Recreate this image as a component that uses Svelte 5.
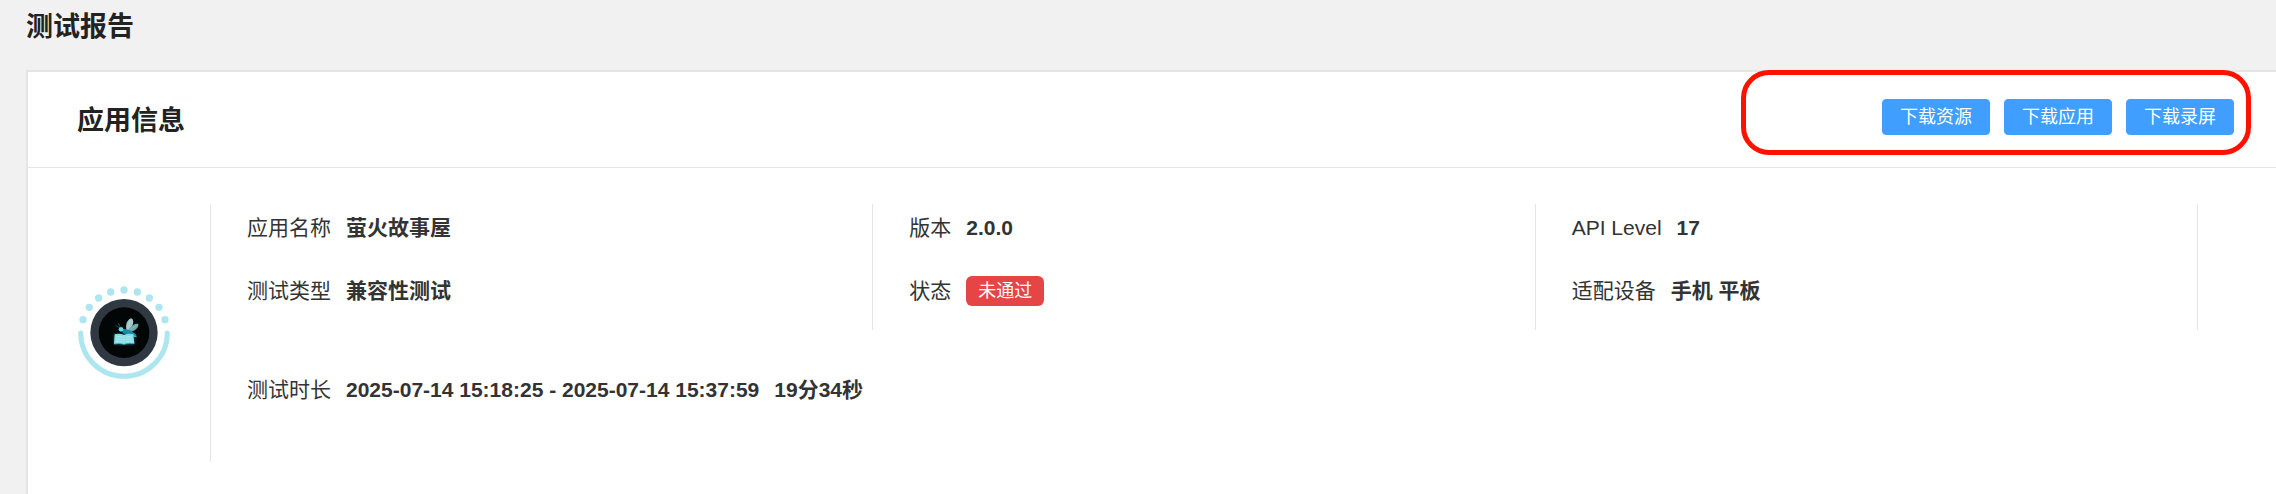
<script lang="ts">
    interface Field {
        label: string;
        value: string;
        failed?: boolean;
    }

    const downloads = ['下载资源', '下载应用', '下载录屏'];

    // One inner list per column
    const columns: Field[][] = [
        [
            { label: '应用名称', value: '萤火故事屋' },
            { label: '测试类型', value: '兼容性测试' }
        ],
        [
            { label: '版本', value: '2.0.0' },
            { label: '状态', value: '未通过', failed: true }
        ],
        [
            { label: 'API Level', value: '17' },
            { label: '适配设备', value: '手机 平板' }
        ]
    ];

    const start = '2025-07-14 15:18:25';
    const end = '2025-07-14 15:37:59';
    const duration = '19分34秒';
</script>

<main>
    <h1>测试报告</h1>

    <section class="card">
        <header>
            <h2>应用信息</h2>
            <div class="actions">
                {#each downloads as text}
                    <button type="button">{text}</button>
                {/each}
            </div>
            <div class="highlight"></div>
        </header>

        <div class="body">
            <svg class="logo" viewBox="54 48 276 282" role="img" aria-label="萤火故事屋">
                <defs>
                    <filter id="glow" x="-30%" y="-30%" width="160%" height="160%">
                        <feGaussianBlur stdDeviation="3" />
                    </filter>
                </defs>
                <g fill="#aee6f0">
                    <circle cx="69" cy="149" r="11" />
                    <circle cx="88" cy="112" r="11" />
                    <circle cx="116" cy="84" r="11" />
                    <circle cx="152" cy="66" r="11" />
                    <circle cx="192" cy="60" r="11" />
                    <circle cx="232" cy="66" r="11" />
                    <circle cx="268" cy="84" r="11" />
                    <circle cx="297" cy="112" r="11" />
                    <circle cx="315" cy="149" r="11" />
                </g>
                <path d="M62 189a130 130 0 0 0 260 0" fill="none" stroke="#aee6f0" stroke-width="15" stroke-linecap="round" />
                <circle cx="192" cy="188" r="101" fill="#303942" />
                <circle cx="192" cy="188" r="76" fill="#020606" />
                <path d="M163 192l27 1 33 0v30h-61z" fill="#19a9be" opacity=".6" filter="url(#glow)" />
                <!-- wings -->
                <path d="M199 180c-3-17 3-32 15-35 10 5 7 25-9 36z" fill="#9fc9cb" />
                <path d="M206 181c7-14 19-22 29-19 2 11-11 22-26 24z" fill="#6fa5aa" />
                <path d="M202 178l10-27M209 181l20-15" stroke="#c5e0df" stroke-width="1" fill="none" />
                <!-- body and head -->
                <path d="M185 178c12-3 26 1 36 10 6 3 9 7 9 14-13-3-26-6-42-13z" fill="#198da5" />
                <path d="M215 190l15 12-9-2z" fill="#35c5d8" />
                <circle cx="183" cy="178" r="7" fill="#63dcea" />
                <path d="M181 171l-6-11M177 173l-9-6" stroke="#187f91" stroke-width="2" fill="none" stroke-linecap="round" />
                <!-- open book -->
                <path d="M164 193q15-5 28 2 14-7 28-2l3 28q-17-3-31 2-14-5-30-1z" fill="#86dce5" />
                <path d="M192 195v28M168 201q11-3 20 1M167 208q11-3 21 1M166 215q12-3 22 1M197 202q10-4 19-1M197 209q10-4 20-1M197 216q11-4 21-1" stroke="#bdf0f2" stroke-width="2" fill="none" />
                <path d="M162 222q16-4 30 1 14-5 31-2" stroke="#25b8ca" stroke-width="2" fill="none" />
            </svg>

            <div class="info">
                <div class="columns">
                    {#each columns as fields}
                        <dl>
                            {#each fields as field}
                                <div class="field">
                                    <dt>{field.label}</dt>
                                    <dd class:badge={field.failed}>{field.value}</dd>
                                </div>
                            {/each}
                        </dl>
                    {/each}
                </div>
                <dl>
                    <div class="field">
                        <dt>测试时长</dt>
                        <dd>{start} - {end}</dd>
                        <dd>{duration}</dd>
                    </div>
                </dl>
            </div>
        </div>
    </section>
</main>

<style>
    :global(body) {
        background: #f1f1f1;
    }

    main {
        padding-left: 26px;
        color: #333;
        font-family: "Liberation Sans", "Noto Sans CJK SC", sans-serif;
        font-size: 21px;
    }

    h1,
    h2 {
        margin: 0;
        color: #222;
        font-size: 27px;
        font-weight: 700;
        line-height: 36px;
    }

    h1 {
        padding: 9px 0 25px;
    }

    h2 {
        padding-top: 2px;
    }

    .card {
        background: #fff;
        border-top: 2px solid #e5e5e5;
        border-left: 2px solid #e5e5e5;
    }

    header {
        position: relative;
        display: flex;
        align-items: center;
        justify-content: space-between;
        height: 95px;
        padding: 0 42px 0 49px;
        border-bottom: 1px solid #e5e5e5;
    }

    .actions {
        display: flex;
        gap: 14px;
        padding-bottom: 5px;
    }

    button {
        height: 36px;
        padding: 0 17px;
        border: 1px solid #409eff;
        border-radius: 4px;
        background: #409eff;
        color: #fff;
        font-family: inherit;
        font-size: 18px;
        line-height: 34px;
        white-space: nowrap;
        cursor: pointer;
    }

    /* Marks the download area, drawn over the card edge */
    .highlight {
        position: absolute;
        top: -2px;
        right: 25px;
        bottom: 12px;
        width: 510px;
        box-sizing: border-box;
        border: 5px solid #ff1100;
        border-radius: 28px;
        pointer-events: none;
    }

    .body {
        display: flex;
        align-items: center;
        gap: 40px;
        padding: 36px 78px 32px 50px;
    }

    .logo {
        flex: none;
        width: 92px;
        height: 94px;
    }

    .info {
        flex: 1;
        padding-bottom: 33px;
        border-left: 1px solid #e5e5e5;
    }

    .columns {
        display: grid;
        grid-template-columns: repeat(3, 1fr);
        margin-bottom: 36px;
    }

    dl {
        margin: 0;
        padding-left: 36px;
    }

    .columns dl {
        border-right: 1px solid #e5e5e5;
    }

    .field {
        display: flex;
        align-items: center;
        gap: 15px;
        height: 48px;
        margin-bottom: 15px;
        line-height: 48px;
        white-space: nowrap;
    }

    dt {
        font-weight: 400;
    }

    dd {
        margin: 0;
        font-weight: 700;
    }

    .badge {
        padding: 0 12px;
        border-radius: 6px;
        background: #e64545;
        color: #fff;
        font-size: 18px;
        font-weight: 400;
        line-height: 30px;
    }
</style>
